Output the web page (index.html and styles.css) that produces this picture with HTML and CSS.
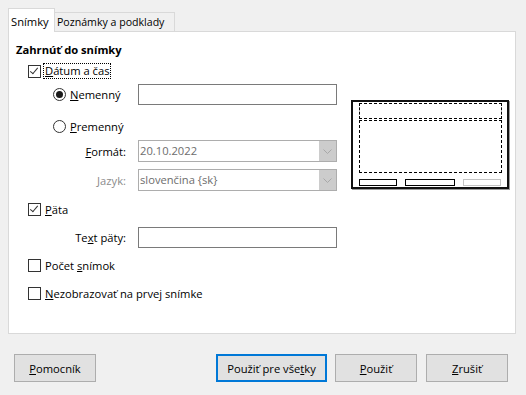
FILE: index.html
```html
<!DOCTYPE html>
<html lang="sk">
<head>
  <meta charset="UTF-8">
  <title>Hlavička a päta</title>
  <link rel="stylesheet" href="styles.css">
</head>
<body>
  <div class="dialog">
    <div class="tabs">
      <div class="tab tab-active">Snímky</div>
      <div class="tab tab-notes">Poznámky a podklady</div>
    </div>

    <div class="panel">
      <div class="form">
        <div class="heading">Zahrnúť do snímky</div>

        <div class="row row-date">
          <span class="check checked"></span>
          <span class="focus"><u>D</u>átum a čas</span>
        </div>

        <div class="row row-fixed">
          <div class="radio-cell">
            <span class="radio selected"></span>
            <span><u>N</u>emenný</span>
          </div>
          <div class="input"></div>
        </div>

        <div class="row row-variable">
          <div class="radio-cell">
            <span class="radio"></span>
            <span><u>P</u>remenný</span>
          </div>
        </div>

        <div class="row row-format">
          <div class="label"><u>F</u>ormát:</div>
          <div class="combo">
            <span class="combo-value">20.10.2022</span>
            <span class="combo-btn">
              <svg width="9" height="5" viewBox="0 0 9 5"><path d="M0.5 0.5 L4.5 4.5 L8.5 0.5" fill="none" stroke="#a8a8a8" stroke-width="1"/></svg>
            </span>
          </div>
        </div>

        <div class="row row-lang">
          <div class="label disabled"><u>J</u>azyk:</div>
          <div class="combo">
            <span class="combo-value">slovenčina {sk}</span>
            <span class="combo-btn">
              <svg width="9" height="5" viewBox="0 0 9 5"><path d="M0.5 0.5 L4.5 4.5 L8.5 0.5" fill="none" stroke="#a8a8a8" stroke-width="1"/></svg>
            </span>
          </div>
        </div>

        <div class="row row-footer">
          <span class="check checked"></span>
          <span><u>P</u>äta</span>
        </div>

        <div class="row row-footer-text">
          <div class="label">Te<u>x</u>t päty:</div>
          <div class="input"></div>
        </div>

        <div class="row row-count">
          <span class="check"></span>
          <span>Počet <u>s</u>nímok</span>
        </div>

        <div class="row row-first">
          <span class="check"></span>
          <span><u>N</u>ezobrazovať na prvej snímke</span>
        </div>
      </div>

      <div class="preview">
        <div class="preview-header"></div>
        <div class="preview-body"></div>
        <div class="preview-footer">
          <span class="slot slot-date"></span>
          <span class="slot slot-text"></span>
          <span class="slot slot-num"></span>
        </div>
      </div>
    </div>

    <div class="buttons">
      <button class="btn"><u>P</u>omocník</button>
      <div class="spacer"></div>
      <button class="btn btn-default">Použiť pre vše<u>t</u>ky</button>
      <button class="btn"><u>P</u>oužiť</button>
      <button class="btn"><u>Z</u>rušiť</button>
    </div>
  </div>
</body>
</html>
```

FILE: styles.css
```css
body {
  margin: 0;
  background: #f0f0f0;
  font-family: 'Open Sans', 'Noto Sans', sans-serif;
  font-size: 11.2px;
  color: #000;
}

u {
  text-decoration: underline;
  text-underline-offset: 1px;
}

.dialog {
  padding: 8px 10px 0 8px;
}

/* tab strip */
.tabs {
  display: flex;
  align-items: flex-end;
  height: 23px;
}

.tab {
  height: 19px;
  line-height: 18px;
  padding: 0 2px;
  border: 1px solid #d9d9d9;
  border-bottom: none;
  background: #f0f0f0;
  box-sizing: border-box;
  margin-left: -1px;
  white-space: nowrap;
  overflow: hidden;
}

.tab-notes {
  width: 121px;
  font-size: 10.6px;
}

.tab-active {
  position: relative;
  z-index: 1;
  height: 24px;
  line-height: 26px;
  margin-left: 0;
  margin-bottom: -1px;
  background: #fff;
  width: 47px;
}

/* white page */
.panel {
  display: flex;
  height: 303px;
  box-sizing: border-box;
  border: 1px solid #d9d9d9;
  background: #fff;
  padding-left: 7px;
}

.form {
  width: 322px;
}

.heading {
  font-weight: bold;
  height: 16px;
  line-height: 16px;
  margin-top: 10px;
}

.row {
  display: flex;
  align-items: center;
  height: 16px;
}

.row-date { margin-top: 5px; padding-left: 12px; }
.row-fixed { margin-top: 5px; height: 21px; padding-left: 37px; }
.row-variable { margin-top: 13px; padding-left: 37px; }
.row-format { margin-top: 6px; height: 22px; }
.row-lang { margin-top: 7px; height: 22px; }
.row-footer { margin-top: 10px; padding-left: 12px; }
.row-footer-text { margin-top: 10px; height: 21px; }
.row-count { margin-top: 9px; padding-left: 12px; }
.row-first { margin-top: 12px; padding-left: 12px; }

.radio-cell {
  display: flex;
  align-items: center;
  width: 85px;
}

.label {
  width: 110px;
  padding-right: 12px;
  text-align: right;
}

.label.disabled {
  color: #8c8c8c;
}

.check {
  width: 13px;
  height: 13px;
  box-sizing: border-box;
  border: 1px solid #333;
  margin-right: 4px;
  flex: none;
  position: relative;
}

.check.checked::after {
  content: '';
  position: absolute;
  left: 3px;
  top: 0px;
  width: 3px;
  height: 7px;
  border: solid #333;
  border-width: 0 1px 1px 0;
  transform: rotate(40deg);
}

.radio {
  width: 13px;
  height: 13px;
  box-sizing: border-box;
  border: 1px solid #333;
  border-radius: 50%;
  margin-right: 4px;
  flex: none;
  display: flex;
  align-items: center;
  justify-content: center;
}

.radio.selected::after {
  content: '';
  width: 7px;
  height: 7px;
  border-radius: 50%;
  background: #1a1a1a;
}

.focus {
  outline: 1px dotted #000;
  outline-offset: 0px;
  padding: 0 1px;
  margin-left: -1px;
  line-height: 14px;
}

.input {
  width: 199px;
  height: 21px;
  box-sizing: border-box;
  border: 1px solid #7a7a7a;
  background: #fff;
}

.combo {
  display: flex;
  width: 199px;
  height: 22px;
  box-sizing: border-box;
  border: 1px solid #adadad;
  background: #fff;
  color: #6d6d6d;
}

.combo-value {
  flex: 1;
  line-height: 20px;
  padding-left: 1px;
}

.combo-btn {
  width: 17px;
  background: #cccccc;
  display: flex;
  align-items: center;
  justify-content: center;
}

/* slide layout preview */
.preview {
  width: 158px;
  height: 89px;
  box-sizing: border-box;
  margin-top: 68px;
  margin-left: 13px;
  border: 2px solid #111;
  box-shadow: 1px 1px 0 #9a9a9a;
  padding: 1px 5px 0 6px;
  display: flex;
  flex-direction: column;
}

.preview-header {
  height: 16px;
  box-sizing: border-box;
  border: 1px dashed #000;
}

.preview-body {
  height: 53px;
  margin-top: 1px;
  box-sizing: border-box;
  border: 1px dashed #000;
}

.preview-footer {
  display: flex;
  margin-top: 6px;
}

.slot {
  height: 7px;
  box-sizing: border-box;
  border: 1px solid #000;
}

.slot-date { width: 38px; }
.slot-text { width: 50px; margin-left: 8px; }
.slot-num { width: 38px; margin-left: 8px; border-color: #c4c4c4; }

/* bottom buttons */
.buttons {
  display: flex;
  margin-top: 20px;
  padding: 0 8px 0 6px;
  gap: 9px;
}

.spacer {
  flex: 1;
}

.btn {
  width: 82px;
  height: 28px;
  font: inherit;
  color: #000;
  background: #e1e1e1;
  border: 1px solid #adadad;
  padding: 0;
}

.btn-default {
  width: 111px;
  border: 2px solid #0078d7;
  margin-right: -1px;
}
```
